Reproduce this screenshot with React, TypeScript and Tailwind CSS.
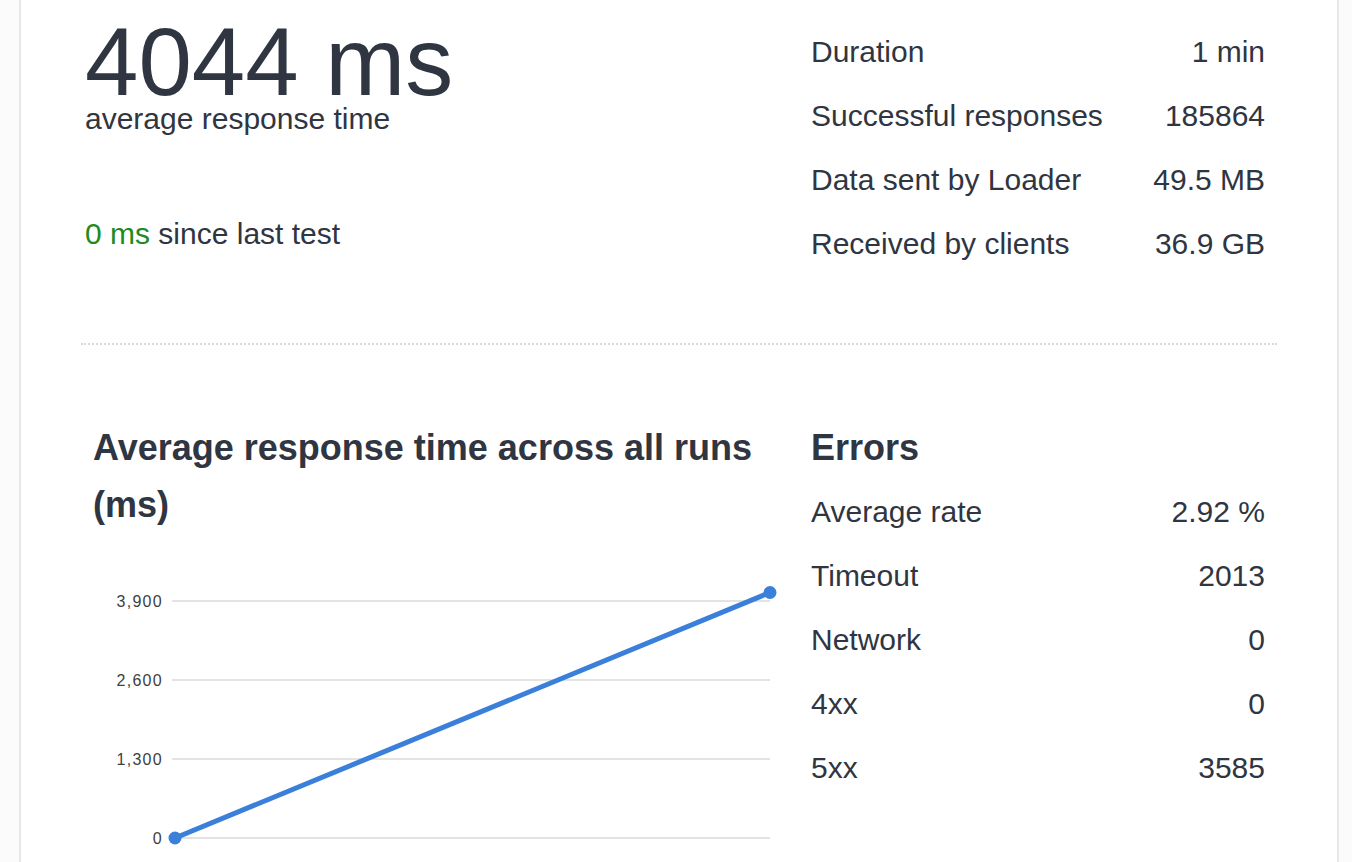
import React from "react";

const font = { fontFamily: '"Liberation Sans", Arial, Helvetica, sans-serif' };

function Row({ label, value }: { label: string; value: string }) {
  return (
    <div className="flex h-[64px] items-center justify-between text-[30px] leading-[64px]">
      <span>{label}</span>
      <span>{value}</span>
    </div>
  );
}

function Chart() {
  const grid = [
    { y: 68, label: "3,900" },
    { y: 147, label: "2,600" },
    { y: 226, label: "1,300" },
    { y: 305, label: "0" },
  ];
  return (
    <svg width="730" height="340" viewBox="0 0 730 340" className="block">
      {grid.map((g) => (
        <g key={g.label}>
          <line x1="91" x2="689" y1={g.y} y2={g.y} stroke="#e3e3e3" strokeWidth="2" />
          <text
            x="82"
            y={g.y + 5.5}
            textAnchor="end"
            fontSize="16"
            letterSpacing="1.3"
            fill="#404040"
            style={font}
          >
            {g.label}
          </text>
        </g>
      ))}
      <line x1="94" y1="305" x2="689" y2="59.5" stroke="#3a7fd9" strokeWidth="5" strokeLinecap="round" />
      <circle cx="94" cy="305" r="6.5" fill="#3a7fd9" />
      <circle cx="689" cy="59.5" r="6.5" fill="#3a7fd9" />
    </svg>
  );
}

export default function App() {
  return (
    <div className="flex h-[862px] w-[1352px] overflow-hidden bg-[#fbfbfb] text-[#2f3541]" style={font}>
      <div className="w-[19px] shrink-0" />
      <main className="w-[1320px] shrink-0 border-x-2 border-[#e7e7e7] bg-white px-[60px]">
        <section className="flex">
          <div className="w-[730px] shrink-0 pl-[4px]">
            <div className="mt-[19px] text-[96px] leading-[86px]">4044 ms</div>
            <div className="-mt-[2px] text-[30px] leading-[32px]">average response time</div>
            <div className="mt-[83px] text-[30px] leading-[32px]">
              <span className="text-[#218a21]">0 ms</span> since last test
            </div>
          </div>
          <div className="flex-1 pr-[12px] pt-[20px]">
            <Row label="Duration" value="1 min" />
            <Row label="Successful responses" value="185864" />
            <Row label="Data sent by Loader" value="49.5 MB" />
            <Row label="Received by clients" value="36.9 GB" />
          </div>
        </section>

        <div className="mt-[67px] border-t-2 border-dotted border-[#d9d9d9]" />

        <section className="flex">
          <div className="w-[730px] shrink-0">
            <h2 className="mt-[74px] pl-[12px] text-[36px] font-bold leading-[57px]">
              Average response time across all runs (ms)
            </h2>
            <Chart />
          </div>
          <div className="flex-1 pr-[12px]">
            <h2 className="mt-[74px] text-[36px] font-bold leading-[57px]">Errors</h2>
            <div className="mt-[4px]">
              <Row label="Average rate" value="2.92 %" />
              <Row label="Timeout" value="2013" />
              <Row label="Network" value="0" />
              <Row label="4xx" value="0" />
              <Row label="5xx" value="3585" />
            </div>
          </div>
        </section>
      </main>
      <div className="flex-1" />
    </div>
  );
}
